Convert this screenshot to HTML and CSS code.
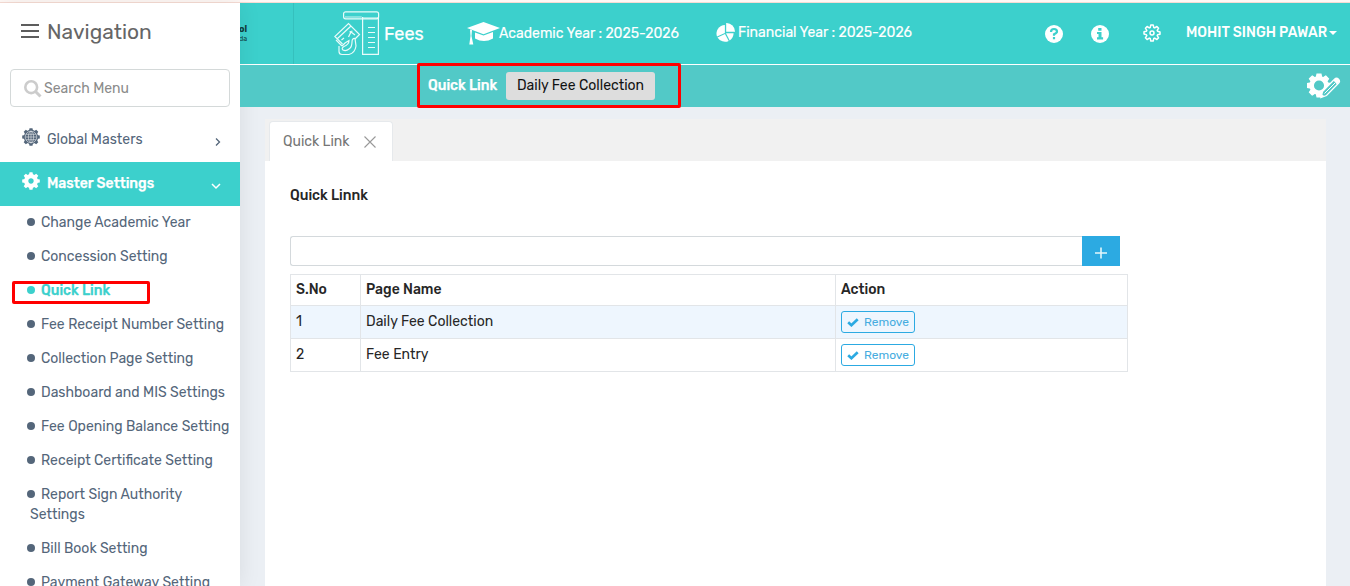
FILE: index.html
```html
<!DOCTYPE html>
<html lang="en">
<head>
<meta charset="utf-8">
<title>Quick Link</title>
<link rel="stylesheet" href="styles.css">
</head>
<body>
<div class="strip"></div>
<div class="app">
  <aside class="sidebar">
    <div class="nav-title">
      <svg width="18" height="16" viewBox="0 0 18 16"><path d="M0 2h18M0 8h18M0 14h18" stroke="#5d5d5d" stroke-width="2"/></svg>
      <span>Navigation</span>
    </div>
    <div class="search">
      <svg width="18" height="18" viewBox="0 0 18 18" fill="none" stroke="#ccc"><circle cx="7.2" cy="7.2" r="5.9" stroke-width="2.6"/><path d="M11.5 11.5l5 5" stroke-width="3"/></svg>
      <span>Search Menu</span>
    </div>
    <div class="group">
      <svg width="18" height="18" viewBox="-9 -9 18 18" fill="#54667a"><g id="teeth"><path d="M-1.5-8.8h3l.6 3h-4.2z"/><path d="M-1.5-8.8h3l.6 3h-4.2z" transform="rotate(45)"/><path d="M-1.5-8.8h3l.6 3h-4.2z" transform="rotate(90)"/><path d="M-1.5-8.8h3l.6 3h-4.2z" transform="rotate(135)"/><path d="M-1.5-8.8h3l.6 3h-4.2z" transform="rotate(180)"/><path d="M-1.5-8.8h3l.6 3h-4.2z" transform="rotate(225)"/><path d="M-1.5-8.8h3l.6 3h-4.2z" transform="rotate(270)"/><path d="M-1.5-8.8h3l.6 3h-4.2z" transform="rotate(315)"/></g><circle r="7.2"/><g fill="none" stroke="#fff" stroke-width=".5"><circle r="5.8"/><ellipse rx="2.6" ry="5.8"/><path d="M0-5.600V5.600M-5.600 0H5.600M-5-2.700H5M-5 2.700H5"/></g></svg>
      <span class="label">Global Masters</span>
      <svg class="chev" width="6" height="8" viewBox="0 0 6 8"><path d="M1 .5L4.5 4 1 7.5" fill="none" stroke="#54667a" stroke-width="1.3"/></svg>
    </div>
    <div class="group open">
      <svg width="18" height="18" viewBox="-9 -9 18 18" fill="#fff"><use href="#teeth"/><circle r="4.8" fill="none" stroke="#fff" stroke-width="4.2"/></svg>
      <span class="label">Master Settings</span>
      <svg class="chev" width="10" height="8" viewBox="0 0 10 8"><path d="M1 2l4 4 4-4" fill="none" stroke="#fff" stroke-width="1.5"/></svg>
    </div>
    <ul class="menu">
      <li><i></i><span>Change Academic Year</span></li>
      <li><i></i><span>Concession Setting</span></li>
      <li class="active"><i></i><span>Quick Link</span><b class="mark"></b></li>
      <li><i></i><span>Fee Receipt Number Setting</span></li>
      <li><i></i><span>Collection Page Setting</span></li>
      <li><i></i><span>Dashboard and MIS Settings</span></li>
      <li><i></i><span>Fee Opening Balance Setting</span></li>
      <li><i></i><span>Receipt Certificate Setting</span></li>
      <li><i></i><span>Report Sign Authority<br>Settings</span></li>
      <li><i></i><span>Bill Book Setting</span></li>
      <li><i></i><span>Payment Gateway Setting</span></li>
    </ul>
  </aside>
  <div class="page">
    <header class="top">
      <div class="school"><b>ol</b><small>da</small></div>
      <div class="fees">
        <svg width="46" height="45" viewBox="0 0 46 45" fill="none" stroke="#e9fbfa" stroke-width="1.2"><rect x="9.6" y=".8" width="35" height="7" rx="2"/><path d="M11 6h16.800" opacity=".7"/><path d="M28.600 6v37.400H44.400V6"/><path d="M29 7h15" stroke-width="2" opacity=".5"/><path d="M34 16.500h7M34 21.500h7M34 26.500h7M34 31.500h7M34 36.500h7"/><path d="M8.500 33L.8 25.500 14.500 12.500 25.500 23.500l-4.500 4.500M3.500 27.500L17 15M2 29l6 6M14.500 26l2.500-5 4 3M15.500 21l3-1M7.500 29l2.500-2"/><path d="M5 35v5.500q0 3 3 3h7q6-1.500 7-8.500l-1-7.500q-3-.5-3 3.500 0 5-3 7-3 2.500-6 1-2-2 1-3.500 5-2 5-6l-4 2.500-3 3"/></svg>
        <span>Fees</span>
      </div>
      <div class="acad">
        <svg width="33" height="23" viewBox="0 0 33 23" fill="#fff"><path d="M0 6L16.500 0 33 6 16.500 12.200z"/><path d="M8 10.600l8.500 3 9.500-3.500v6.500q-9 5-18 0z"/><path d="M3 7.500l2 .5-.5 6 1.800 8.500H2.300L3.500 14z"/></svg>
        <span>Academic Year : 2025-2026</span>
      </div>
      <div class="fin">
        <svg width="19" height="19" viewBox="0 0 19 19" fill="#fff"><path d="M10.200 0A8.600 8.600 0 0 1 19 8.700H10.200z"/><path d="M8.900 2v8L1 13.600A8.700 8.700 0 0 1 8.900 2z"/><path d="M9 11l3.700 6.900A8.700 8.700 0 0 1 1.500 14.500z"/><path d="M10 10.200H17.600A8.700 8.700 0 0 1 13.700 17.400z"/></svg>
        <span>Financial Year : 2025-2026</span>
      </div>
      <div class="tools">
        <svg width="18" height="18" viewBox="0 0 18 18"><circle cx="9" cy="9" r="9" fill="#fff"/><path d="M6 7q0-3 3-3t3 2.600Q12 8.200 9 9.200v1.600M9 12v2.300" fill="none" stroke="#3cd0cc" stroke-width="2.200"/></svg>
        <svg width="18" height="18" viewBox="0 0 18 18"><circle cx="9" cy="9" r="9" fill="#fff"/><path d="M7.200 3h3.300v2.700H7.200zM6 7h4.500v5.200h1.600v2.200H6v-2.200h1.500V9H6z" fill="#3cd0cc"/></svg>
        <svg width="18" height="18" viewBox="-9 -9 18 18" fill="none" stroke="#fff" stroke-width="1.500" stroke-linejoin="round"><path d="M-1.200-8h2.400l.6 2.500.9.400 2.200-1.400 1.700 1.700-1.400 2.200.4.900 2.400.6v2.300l-2.400.5-.4.900 1.400 2.200-1.700 1.700-2.200-1.400-.9.400-.6 2.500h-2.400l-.6-2.500-.9-.4-2.200 1.400-1.700-1.700 1.400-2.200-.4-.9-2.400-.6v-2.300l2.400-.5.4-.9-1.400-2.200 1.700-1.700 2.200 1.400.9-.4z"/><circle r="2"/></svg>
      </div>
      <div class="user"><span>MOHIT SINGH PAWAR</span><i></i></div>
    </header>
    <div class="quick">
      <span class="ql">Quick Link</span>
      <span class="chip"><span>Daily Fee Collection</span></span>
      <svg class="edit" width="34" height="26" viewBox="0 0 34 26"><g transform="translate(12 12.500) scale(1.300)" fill="#fff"><g stroke="#fff" stroke-width="1"><use href="#teeth"/></g><circle r="5.600" fill="none" stroke="#fff" stroke-width="3.400"/></g><path d="M14 24.500l1.500-6L27.500 6.200q2-2 4 0t0 4L19.500 22.500z" fill="#52c9c7" stroke="#fff" stroke-width="1.300"/><path d="M26.500 7.500l1.500-1.500q2-1.500 3.500 0t.2 3.700L30 11.500z" fill="#fff"/><path d="M17.500 20.500L28 10" stroke="#fff"/><path d="M14 24.500l3.500-1-2-2z" fill="#fff"/></svg>
      <b class="mark"></b>
    </div>
    <main class="panel">
      <div class="tabs"><div class="tab"><span>Quick Link</span><svg width="12" height="12" viewBox="0 0 12 12"><path d="M.5.500l11 11M11.500.500l-11 11" stroke="#999" stroke-width="1.100"/></svg></div></div>
      <div class="body">
        <h1><span>Quick Linnk</span></h1>
        <div class="entry"><div class="field"></div><div class="add"><svg width="12" height="12" viewBox="0 0 12 12"><path d="M0 6h12M6 .500v11" stroke="#e4f7fb" stroke-width="1.600"/></svg></div></div>
        <table>
          <colgroup><col class="c1"><col class="c2"><col></colgroup>
          <tr class="head"><th>S.No</th><th>Page Name</th><th>Action</th></tr>
          <tr class="odd"><td>1</td><td><span>Daily Fee Collection</span></td><td><span class="btn"><svg width="12" height="9" viewBox="0 0 12 9"><path d="M1.200 4.200l3.200 3L10.700 1.200" fill="none" stroke="#2caae2" stroke-width="2.700"/></svg>Remove</span></td></tr>
          <tr><td>2</td><td><span>Fee Entry</span></td><td><span class="btn"><svg width="12" height="9" viewBox="0 0 12 9"><path d="M1.200 4.200l3.200 3L10.700 1.200" fill="none" stroke="#2caae2" stroke-width="2.700"/></svg>Remove</span></td></tr>
        </table>
      </div>
    </main>
  </div>
</div>
</body>
</html>
```
FILE: styles.css
```css
* { box-sizing: border-box; }
body { margin: 0; height: 586px; overflow: hidden; background: #ebeff4; font: 14px/20px Rubik, Roboto, sans-serif; color: #262626; }
svg { display: block; flex: none; }
span { white-space: nowrap; }
.strip { height: 3px; background: #fff8f5; border-bottom: 1px solid #f6dcd4; }
.app { display: flex; height: 583px; }
.sidebar { width: 240px; flex: none; background: #fff; color: #54667a; box-shadow: 1px 0 20px rgba(0,0,0,.08); position: relative; overflow: hidden; }
.nav-title { display: flex; align-items: center; gap: 8px; height: 57px; padding-left: 21px; font-size: 21px; color: #666; }
.nav-title svg { margin-top: -1px; }
.search { display: flex; align-items: center; gap: 2px; height: 38px; margin: 9px 10px 11px; padding: 2px 0 0 13px; border: 1px solid #d4d9d9; border-radius: 4px; color: #8b8b8b; }
.group { display: flex; align-items: center; height: 44px; padding: 0 19px 0 22px; }
.group > svg:first-child { margin-top: -7px; }
.label { margin-left: 7px; flex: 1; }
.chev { margin-top: 3px; }
.open { background: #3cd0cc; color: #fff; font-weight: 500; -webkit-text-stroke: .25px; }
.menu { list-style: none; margin: 0; padding: 0; }
.menu li { padding: 7px 0 7px 30px; position: relative; }
.menu i { display: inline-block; width: 8px; height: 8px; border-radius: 50%; background: #54667a; margin: 0 6px 1px -3px; }
.menu .active { color: #3cd0cc; font-weight: 500; -webkit-text-stroke: .25px; }
.menu .active i { background: #3cd0cc; }
.mark { position: absolute; border: 3px solid #f00; border-radius: 2px; }
.menu .mark { left: 12px; top: 7px; width: 138px; height: 23px; }
.page { flex: 1; min-width: 0; }
.top { display: flex; height: 62px; background: #3cd0cc; border-bottom: 1px solid #fff; color: #fff; align-items: center; }
.school { width: 54px; height: 61px; border-right: 1px solid #35c0bd; color: #123e3e; padding-top: 22px; font-size: 9px; line-height: 9px; }
.school b, .school small { display: block; margin-left: -1px; }
.school small { font-size: 7px; }
.fees { display: flex; align-items: center; gap: 4px; margin-left: 40px; width: 133px; font-size: 18px; }
.fees span { margin-top: 1px; -webkit-text-stroke: .25px; }
.acad { display: flex; align-items: center; width: 249px; -webkit-text-stroke: .15px; }
.acad span { margin-left: -1px; }
.fin { display: flex; align-items: center; gap: 3px; width: 329px; margin-top: -2px; -webkit-text-stroke: .15px; }
.tools { display: flex; gap: 28px; width: 141px; }
.tools svg:nth-child(3) { margin: -1px 0 0 6px; }
.user { display: flex; align-items: center; gap: 2px; margin-top: -1px; font-weight: 500; }
.user i { border: 4px solid transparent; border-top-color: #fff; border-bottom: 0; }
.quick { position: relative; display: flex; align-items: center; height: 42px; background: #52c9c7; color: #fff; padding: 0 9px 0 188px; }
.ql { width: 78px; font-weight: 500; -webkit-text-stroke: .25px; }
.chip { width: 149px; height: 28px; line-height: 28px; background: #ddd; color: #111; border-radius: 3px; text-align: center; }
.edit { margin-left: auto; }
.quick .mark { left: 177px; top: -2px; width: 264px; height: 45px; }
.panel { margin: 12px 24px 0 25px; background: #fff; height: 467px; }
.tabs { height: 42px; background: #f1f1f1; padding: 2px 0 0 4px; }
.tab { display: flex; align-items: center; justify-content: space-between; width: 124px; height: 40px; background: #fff; border: 1px solid #e6e9ec; border-bottom: 0; border-radius: 4px 4px 0 0; padding: 0 16px 0 13px; color: #757575; }
.body { padding: 25px; }
h1 { margin: 0 0 30px; font-size: 14px; font-weight: 500; line-height: 20px; }
.entry { display: flex; width: 830px; height: 30px; margin-bottom: 8px; }
.field { flex: 1; border: 1px solid #d4d9dc; border-right: 0; border-radius: 3px 0 0 3px; }
.add { width: 38px; background: #2caae2; display: flex; align-items: center; justify-content: center; padding-top: 3px; }
table { border-collapse: collapse; table-layout: fixed; width: 838px; }
.c1 { width: 70px; }
.c2 { width: 475px; }
th, td { border: 1px solid #e2e5e8; padding: 0 5px; text-align: left; height: 33px; }
th { font-weight: 500; height: 31px; }
.odd { background: #eef6fe; }
.btn { display: flex; align-items: center; gap: 5px; width: 74px; height: 22px; padding-left: 5px; border: 1px solid #2caae2; border-radius: 3px; color: #46ace0; font-size: 12px; }
```
